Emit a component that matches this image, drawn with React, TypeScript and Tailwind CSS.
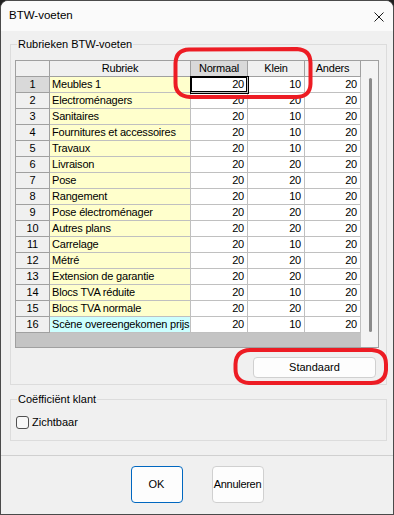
import React from 'react';

type Row = [string, number, number, number];

const rows: Row[] = [
  ['Meubles 1', 20, 10, 20],
  ['Electroménagers', 20, 20, 20],
  ['Sanitaires', 20, 10, 20],
  ['Fournitures et accessoires', 20, 10, 20],
  ['Travaux', 20, 10, 20],
  ['Livraison', 20, 20, 20],
  ['Pose', 20, 20, 20],
  ['Rangement', 20, 10, 20],
  ['Pose électroménager', 20, 20, 20],
  ['Autres plans', 20, 20, 20],
  ['Carrelage', 20, 10, 20],
  ['Métré', 20, 20, 20],
  ['Extension de garantie', 20, 20, 20],
  ['Blocs TVA réduite', 20, 10, 20],
  ['Blocs TVA normale', 20, 20, 20],
  ['Scène overeengekomen prijs', 20, 10, 20],
];

const GridHeader = () => (
  <div className="flex h-[16px] text-[11px] leading-[15px] tracking-[-0.2px]">
    <div className="w-[34px] border-r border-b border-[#a0a0a0] bg-[#f0f0f0]" />
    <div className="w-[141px] border-r border-b border-[#a0a0a0] bg-[#f0f0f0] text-center">Rubriek</div>
    <div className="w-[57px] border-r border-b border-[#a0a0a0] bg-[#d9d9d9] text-center">Normaal</div>
    <div className="w-[57px] border-r border-b border-[#a0a0a0] bg-[#f0f0f0] text-center">Klein</div>
    <div className="w-[56px] border-r border-b border-[#a0a0a0] bg-[#f0f0f0] text-center">Anders</div>
  </div>
);

const GridRow = ({ row, index }: { row: Row; index: number }) => {
  const [name, normaal, klein, anders] = row;
  const first = index === 0;
  const last = index === rows.length - 1;
  return (
    <div className="flex h-[16px] text-[11px] leading-[15px] tracking-[-0.2px]">
      <div
        className={`w-[34px] border-r border-b border-[#a0a0a0] text-center ${
          first ? 'bg-[#d9d9d9]' : 'bg-[#f0f0f0]'
        }`}
      >
        {index + 1}
      </div>
      <div
        className={`w-[141px] overflow-hidden whitespace-nowrap border-r border-b border-[#c0c0c0] pl-[2px] ${
          last ? 'bg-[#ccffff]' : 'bg-[#ffffcc]'
        }`}
      >
        {name}
      </div>
      <div
        className={`w-[57px] border-r border-b border-[#c0c0c0] bg-white pr-[3px] text-right ${
          first ? 'relative z-10 shadow-[0_0_0_1px_#000,inset_0_0_0_1px_#000]' : ''
        }`}
      >
        {normaal}
      </div>
      <div className="w-[57px] border-r border-b border-[#c0c0c0] bg-white pr-[3px] text-right">{klein}</div>
      <div className="w-[56px] border-r border-b border-[#c0c0c0] bg-white pr-[3px] text-right">{anders}</div>
    </div>
  );
};

export default function App() {
  return (
    <div className="relative h-[515px] w-[394px] bg-[#1f1f1f] font-['Liberation_Sans',Arial,sans-serif] text-black">
      <div className="flex h-full flex-col overflow-hidden rounded-t-[8px] border border-[#4a4a4a] bg-[#f0f0f0]">
        {/* title bar */}
        <div className="flex h-[30px] shrink-0 items-center justify-between bg-[#fafafa] pl-[8px] pr-[9px]">
          <span className="text-[11.5px]">BTW-voeten</span>
          <svg width="10" height="10" viewBox="0 0 10 10" className="mt-[1px]">
            <path d="M0.5 0.5 L9.5 9.5 M9.5 0.5 L0.5 9.5" stroke="#1a1a1a" strokeWidth="1" fill="none" />
          </svg>
        </div>

        {/* Rubrieken group */}
        <div className="relative ml-[9px] mt-[13px] w-[377px] border border-[#dcdcdc] pb-[6px] pl-[4px] pt-[15px]">
          <span className="absolute -top-[8px] left-[6px] bg-[#f0f0f0] px-[1px] text-[11px] leading-[14px]">
            Rubrieken BTW-voeten
          </span>
          <div className="flex w-[364px] border border-[#a0a0a0] bg-[#f0f0f0]">
            <div className="flex w-[345px] flex-col">
              <GridHeader />
              {rows.map((r, i) => (
                <GridRow key={i} row={r} index={i} />
              ))}
              <div className="h-[14px] bg-[#c4c4c4]" />
            </div>
            <div className="w-[17px] bg-[#f3f3f3] pl-[8px] pt-[17px]">
              <div className="h-[254px] w-[3px] rounded-full bg-[#8a8a8a]" />
            </div>
          </div>
          <div className="mt-[9px] flex justify-end pr-[10px]">
            <button className="h-[21px] w-[123px] rounded-[4px] border border-[#d0d0d0] bg-[#fdfdfd] text-[11px] leading-[19px]">
              Standaard
            </button>
          </div>
        </div>

        {/* Coefficient group */}
        <div className="relative ml-[9px] mt-[14px] h-[42px] w-[377px] border border-[#dcdcdc] pl-[5px] pt-[16px]">
          <span className="absolute -top-[8px] left-[6px] bg-[#f0f0f0] px-[1px] text-[11px] leading-[14px]">
            Coëfficiënt klant
          </span>
          <label className="flex items-center gap-[3px] text-[11px] leading-[13px]">
            <span className="h-[13px] w-[13px] rounded-[3px] border border-[#505050] bg-[#f7f7f7]" />
            <span>Zichtbaar</span>
          </label>
        </div>

        {/* footer */}
        <div className="mt-[14px] flex flex-1 justify-center gap-[29px] border-t border-[#d0d0d0] pt-[10px]">
          <button className="h-[37px] w-[52px] rounded-[4px] border border-[#0067c0] bg-[#fdfdfd] text-[11px]">
            OK
          </button>
          <button className="h-[37px] w-[52px] rounded-[4px] border border-[#d0d0d0] bg-[#fdfdfd] px-0 text-[11px] tracking-[-0.3px]">
            Annuleren
          </button>
        </div>
      </div>

      {/* red annotations */}
      <svg className="pointer-events-none absolute left-0 top-0" width="394" height="515" viewBox="0 0 394 515">
        <path
          d="M189 49.5 L297 49 Q310.5 50 310.5 63 L310.5 84 Q310 96.5 297 97 L190 97 Q175.5 96 175.5 83 L175.5 63 Q176 50 189 49.5 Z"
          stroke="#ed1c24"
          strokeWidth="4"
          fill="none"
        />
        <path
          d="M250 350 L372 350 Q386 351 386 364 L386 370 Q385 383 371 383 L249 383 Q235.5 382 235.5 369 L235.5 364 Q236 350.5 250 350 Z"
          stroke="#ed1c24"
          strokeWidth="4"
          fill="none"
        />
      </svg>
    </div>
  );
}
